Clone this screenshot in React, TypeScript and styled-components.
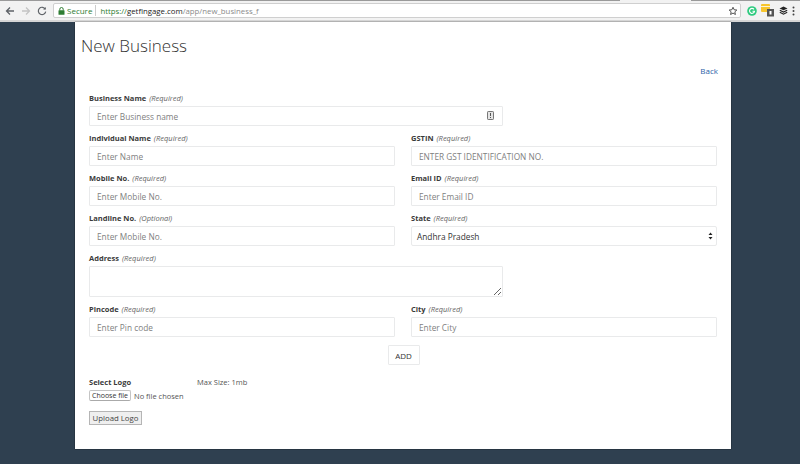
import { createGlobalStyle } from 'styled-components';
import styled from 'styled-components';

const Global = createGlobalStyle`
  html, body { margin: 0; padding: 0; height: 100%; overflow: hidden; }
  body { background: #2f4050; font-family: "Open Sans", "Noto Sans", sans-serif; color: #333; }
`;

const Page = styled.div`
  width: 800px;
  height: 464px;
  display: flex;
  flex-direction: column;
  overflow: hidden;
`;

const TabStrip = styled.div`
  height: 1px;
  display: flex;
  background: #9a9a9a;
`;

const ActiveTab = styled.div`
  width: 71px;
  margin-left: 620px;
  background: #f2f2f2;
`;

const Toolbar = styled.div`
  height: 21px;
  padding-top: 2px;
  box-sizing: border-box;
  background: #f2f2f2;
  border-bottom: 2px solid #d6d6d6;
  display: flex;
  align-items: flex-start;
`;

const NavIcons = styled.div`
  width: 53px;
  height: 15px;
  padding-left: 5px;
  box-sizing: border-box;
  display: flex;
  align-items: center;
  gap: 6px;
`;

const Omnibox = styled.div`
  width: 688px;
  height: 15px;
  box-sizing: border-box;
  background: #fff;
  border: 1px solid #cfcfcf;
  border-radius: 2px;
  display: flex;
  align-items: center;
  padding: 0 2px 0 4px;
  font-size: 8px;
  white-space: nowrap;
`;

const Secure = styled.span`
  color: #2e7d32;
  margin-left: 2px;
  padding-right: 3px;
  border-right: 1px solid #ccc;
`;

const Url = styled.span`
  margin-left: 4px;
  color: #8a8a8a;
  flex: 1;
  font-size: 7.8px;
  b { font-weight: 400; color: #222; }
  i { font-style: normal; color: #2e7d32; }
`;

const Extensions = styled.div`
  flex: 1;
  height: 15px;
  display: flex;
  align-items: center;
  padding-left: 6px;
  gap: 4px;
`;

const Sheet = styled.main`
  width: 656px;
  height: 427px;
  margin-left: 75px;
  box-sizing: border-box;
  background: #fff;
  padding: 12px 13px 0 6px;
  box-shadow: 0 0 1px #000;
  flex-shrink: 0;
`;

const Title = styled.h1`
  margin: 0;
  font-size: 17px;
  line-height: 24px;
  font-weight: 300;
  color: #333;
`;

const BackRow = styled.div`
  margin-top: 7px;
  text-align: right;
  font-size: 8px;
  line-height: 12px;
  height: 12px;
`;

const BackLink = styled.a`
  color: #2d62a8;
`;

const Form = styled.form`
  margin: 16px 0 0 8px;
  display: grid;
  grid-template-columns: 306px 306px;
  column-gap: 16px;
  row-gap: 7px;
`;

const Field = styled.div<{ $wide?: boolean }>`
  display: flex;
  flex-direction: column;
  gap: 3px;
  grid-column: ${p => (p.$wide ? '1 / -1' : 'auto')};
  width: ${p => (p.$wide ? '414px' : 'auto')};
`;

const Label = styled.label`
  font-size: 7.5px;
  line-height: 10px;
  font-weight: 700;
  color: #3a3a3a;
  em { font-weight: 400; color: #666; margin-left: 1px; }
`;

const Control = styled.div`
  position: relative;
  display: flex;
`;

const Input = styled.input`
  width: 100%;
  height: 20px;
  box-sizing: border-box;
  border: 1px solid #e9eaeb;
  border-radius: 1px;
  padding: 0 7px;
  font: 400 8.3px "Open Sans", sans-serif;
  background: #fff;
  &::placeholder { color: #808080; opacity: 1; }
`;

const FieldBadge = styled.svg`
  position: absolute;
  right: 9px;
  top: 5px;
`;

const TextArea = styled.textarea`
  width: 100%;
  height: 31px;
  box-sizing: border-box;
  border: 1px solid #e9eaeb;
  border-radius: 1px;
  display: block;
  margin: 0;
`;

const SelectBox = styled.div`
  height: 20px;
  box-sizing: border-box;
  width: 100%;
  border: 1px solid #e9eaeb;
  border-radius: 2px;
  padding: 0 3px 0 5px;
  display: flex;
  align-items: center;
  justify-content: space-between;
  font-size: 8.3px;
  color: #333;
`;

const AddRow = styled.div`
  margin-top: 8px;
  margin-left: 8px;
  width: 629px;
  display: flex;
  justify-content: center;
`;

const AddButton = styled.button`
  width: 32px;
  height: 20px;
  padding: 0;
  background: #fff;
  border: 1px solid #e9eaeb;
  border-radius: 1px;
  font: 400 8px "Open Sans", sans-serif;
  color: #333;
`;

const LogoBlock = styled.div`
  margin: 12px 0 0 8px;
  display: flex;
  flex-direction: column;
`;

const LogoRow = styled.div`
  display: flex;
  font-size: 7.5px;
  line-height: 10px;
  color: #555;
`;

const LogoLabel = styled.span`
  width: 108px;
  font-weight: 700;
  color: #3a3a3a;
`;

const FileRow = styled.div`
  margin-top: 3px;
  display: flex;
  align-items: center;
  gap: 3px;
  font-size: 7.5px;
  color: #555;
`;

const ChooseButton = styled.button`
  width: 42px;
  height: 11px;
  padding: 0;
  background: #fff;
  border: 1px solid #c4c4c4;
  border-bottom-color: #aaa;
  border-radius: 2px;
  font: 400 7px "Open Sans", sans-serif;
  line-height: 9px;
  color: #333;
`;

const UploadButton = styled.button`
  width: 53px;
  height: 14px;
  margin-top: 10px;
  padding: 0;
  background: #efefef;
  border: 1px solid #b5b5b5;
  font: 400 7.8px "Open Sans", sans-serif;
  line-height: 12px;
  color: #444;
`;

const ArrowIcon = ({ color, flip }: { color: string; flip?: boolean }) => (
  <svg width="10" height="10" viewBox="0 0 10 10" fill="none" stroke={color} strokeWidth="1.3" style={flip ? { transform: 'scaleX(-1)' } : undefined}>
    <path d="M9 5H1.5M5 1.5L1.5 5L5 8.5" />
  </svg>
);

const fields = [
  { label: 'Individual Name', note: 'Required', hint: 'Enter Name' },
  { label: 'GSTIN', note: 'Required', hint: 'ENTER GST IDENTIFICATION NO.' },
  { label: 'Mobile No.', note: 'Required', hint: 'Enter Mobile No.' },
  { label: 'Email ID', note: 'Required', hint: 'Enter Email ID' },
  { label: 'Landline No.', note: 'Optional', hint: 'Enter Mobile No.' },
];

export default function App() {
  return (
    <Page>
      <Global />
      <TabStrip>
        <ActiveTab />
      </TabStrip>
      <Toolbar>
        <NavIcons>
          <ArrowIcon color="#5f6368" />
          <ArrowIcon color="#c4c4c4" flip />
          <svg width="10" height="10" viewBox="0 0 10 10" fill="none" stroke="#5f6368" strokeWidth="1.2">
            <path d="M8.3 3.2A3.7 3.7 0 1 0 8.7 5.6" />
            <path d="M8.8 0.9V3.6H6.1" fill="#5f6368" stroke="none" />
          </svg>
        </NavIcons>
        <Omnibox>
          <svg width="7" height="8" viewBox="0 0 7 8">
            <rect x="0.5" y="3.2" width="6" height="4.6" rx="0.5" fill="#2e7d32" />
            <path d="M1.8 3.4V2.2a1.7 1.7 0 0 1 3.4 0v1.2" fill="none" stroke="#2e7d32" />
          </svg>
          <Secure>Secure</Secure>
          <Url>
            <i>https://</i>
            <b>getfingage.com</b>/app/new_business_f
          </Url>
          <svg width="10" height="10" viewBox="0 0 24 24" fill="none" stroke="#444" strokeWidth="2.2">
            <path d="M12 3l2.8 6 6.4.7-4.8 4.3 1.4 6.4L12 17l-5.8 3.4 1.4-6.4L2.8 9.700l6.4-.7z" />
          </svg>
        </Omnibox>
        <Extensions>
          <svg width="10" height="10" viewBox="0 0 10 10">
            <circle cx="5" cy="5" r="4.800" fill="#2ecb7f" />
            <path d="M7 3.3A2.500 2.500 0 1 0 7.500 5.300H5.500" fill="none" stroke="#fff" strokeWidth="1.1" />
          </svg>
          <svg width="14" height="13" viewBox="0 0 14 13">
            <rect x="0" y="0" width="9" height="8" rx="1" fill="#f7c52d" />
            <rect x="0" y="2" width="9" height="0.8" fill="#fff" />
            <rect x="6" y="5" width="7" height="7.500" fill="#555" />
            <rect x="8.500" y="7" width="2" height="3.500" fill="#fff" />
          </svg>
          <svg width="9" height="9" viewBox="0 0 9 9">
            <path d="M4.500 0.500L8.500 2.500L4.500 4.200L0.500 2.500Z" fill="#222" />
            <path d="M0.800 4.300L4.500 6L8.200 4.300M0.800 6.300L4.500 8.200L8.200 6.300" fill="none" stroke="#222" strokeWidth="1.200" />
          </svg>
          <svg width="3" height="10" viewBox="0 0 3 10" fill="#444">
            <circle cx="1.500" cy="1.500" r="1" />
            <circle cx="1.500" cy="5" r="1" />
            <circle cx="1.500" cy="8.500" r="1" />
          </svg>
        </Extensions>
      </Toolbar>
      <Sheet>
        <Title>New Business</Title>
        <BackRow>
          <BackLink>Back</BackLink>
        </BackRow>
        <Form>
          <Field $wide>
            <Label>
              Business Name <em>(Required)</em>
            </Label>
            <Control>
              <Input placeholder="Enter Business name" />
              <FieldBadge width="7" height="9" viewBox="0 0 7 9">
                <rect x="0.500" y="0.500" width="6" height="8" rx="0.700" fill="#e4e4e4" stroke="#777" />
                <rect x="3" y="2" width="1" height="3" fill="#555" />
                <rect x="3" y="6" width="1" height="1" fill="#555" />
              </FieldBadge>
            </Control>
          </Field>
          {fields.map(f => (
            <Field key={f.label}>
              <Label>
                {f.label} <em>({f.note})</em>
              </Label>
              <Input placeholder={f.hint} />
            </Field>
          ))}
          <Field>
            <Label>
              State <em>(Required)</em>
            </Label>
            <SelectBox>
              Andhra Pradesh
              <svg width="5" height="8" viewBox="0 0 5 8" fill="#222">
                <path d="M2.500 0.500L4.500 3H0.500ZM2.500 7.500L0.500 5H4.500Z" />
              </svg>
            </SelectBox>
          </Field>
          <Field $wide>
            <Label>
              Address <em>(Required)</em>
            </Label>
            <TextArea />
          </Field>
          <Field>
            <Label>
              Pincode <em>(Required)</em>
            </Label>
            <Input placeholder="Enter Pin code" />
          </Field>
          <Field>
            <Label>
              City <em>(Required)</em>
            </Label>
            <Input placeholder="Enter City" />
          </Field>
        </Form>
        <AddRow>
          <AddButton type="button">ADD</AddButton>
        </AddRow>
        <LogoBlock>
          <LogoRow>
            <LogoLabel>Select Logo</LogoLabel>
            Max Size: 1mb
          </LogoRow>
          <FileRow>
            <ChooseButton type="button">Choose file</ChooseButton>
            No file chosen
          </FileRow>
          <div>
            <UploadButton type="button">Upload Logo</UploadButton>
          </div>
        </LogoBlock>
      </Sheet>
    </Page>
  );
}
